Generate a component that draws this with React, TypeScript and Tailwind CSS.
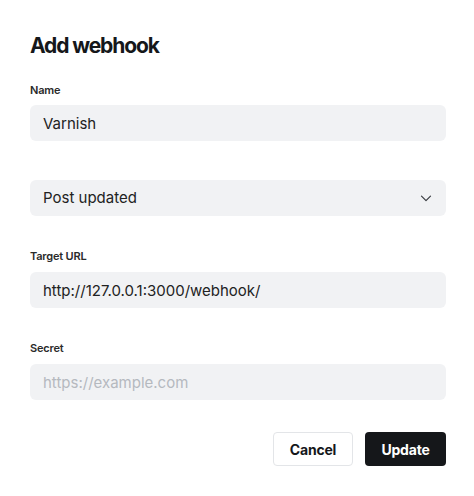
import React from "react";

const Label: React.FC<{ children: React.ReactNode; className?: string }> = ({ children, className }) => (
  <div
    className={`h-[16px] leading-[16px] text-[11px] font-semibold tracking-[-0.2px] text-[#2a2a2a] ${className ?? ""}`}
  >
    {children}
  </div>
);

const App: React.FC = () => {
  const field =
    "w-full h-[36px] rounded-[6px] bg-[#f1f2f4] px-[13px] text-[15px] text-[#222] outline-none placeholder-[#b5b9bf]";

  return (
    <div
      className="w-[474px] h-[496px] bg-white pt-[32px] pl-[30px] pr-[28px]"
      style={{ fontFamily: "Inter, 'Liberation Sans', sans-serif" }}
    >
      <h1 className="h-[28px] leading-[28px] text-[21px] font-bold text-[#15171a] tracking-[-1.1px]">
        Add webhook
      </h1>

      {/* Name */}
      <Label className="mt-[22px]">Name</Label>
      <input className={`${field} mt-[7px]`} defaultValue="Varnish" />

      {/* Event */}
      <div className={`${field} mt-[39px] flex items-center justify-between pr-[14px]`}>
        <span>Post updated</span>
        <svg width="12" height="7" viewBox="0 0 12 7" fill="none">
          <path d="M1.5 1.2l4.5 4.5 4.5-4.5" stroke="#3a3d42" strokeWidth="1.2" strokeLinecap="round" strokeLinejoin="round" />
        </svg>
      </div>

      {/* Target URL */}
      <Label className="mt-[32px]">Target URL</Label>
      <input className={`${field} mt-[8px]`} defaultValue="http://127.0.0.1:3000/webhook/" />

      {/* Secret */}
      <Label className="mt-[32px]">Secret</Label>
      <input className={`${field} mt-[8px]`} placeholder="https://example.com" />

      <div className="mt-[32px] flex justify-end gap-[12px]">
        <button className="w-[80px] h-[34px] rounded-[4px] border border-[#e3e5e8] bg-white text-[14px] font-bold tracking-[-0.2px] text-[#15171a]">
          Cancel
        </button>
        <button className="w-[81px] h-[34px] rounded-[4px] bg-[#15171a] text-[14px] font-bold tracking-[-0.2px] text-white">
          Update
        </button>
      </div>
    </div>
  );
};

export default App;
